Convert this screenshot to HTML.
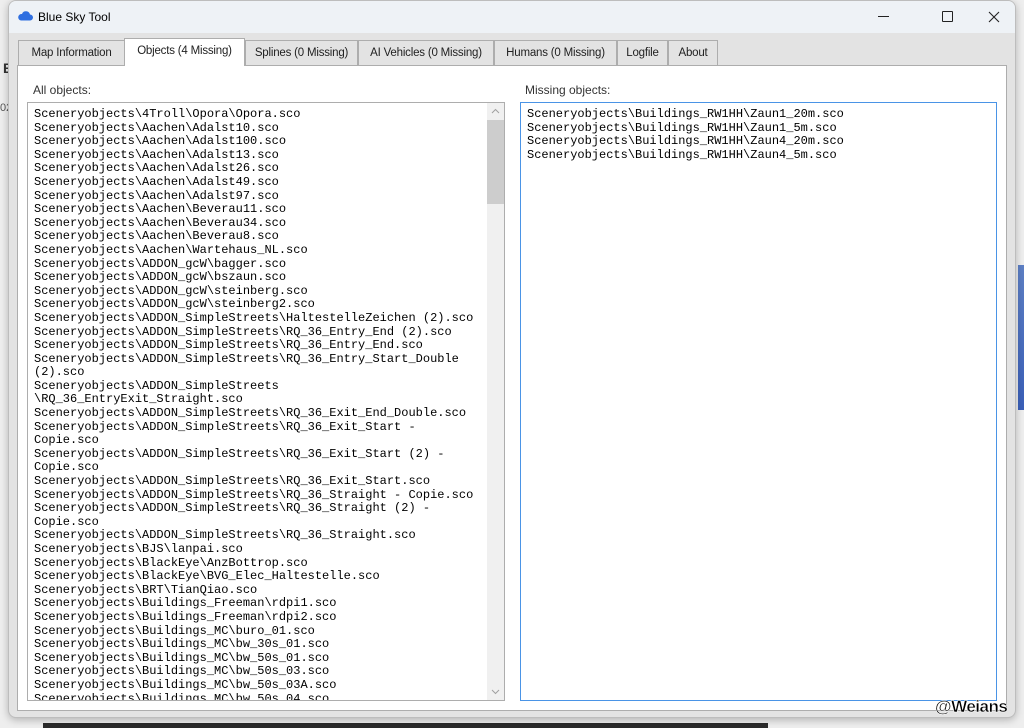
<!DOCTYPE html>
<html><head><meta charset="utf-8"><style>
*{margin:0;padding:0;box-sizing:border-box}
body{width:1024px;height:728px;overflow:hidden;background:#eeeeee;font-family:"Liberation Sans",sans-serif;position:relative}
.win{position:absolute;left:8px;top:0;width:1008px;height:718px;background:#e3e3e3;border:1px solid #bdbdbd;border-radius:8px;overflow:hidden;box-shadow:0 2px 8px rgba(0,0,0,.25)}
.title{height:32px;background:#eef2f6;position:relative;font-size:12px;color:#000}
.title span{position:absolute;left:29px;top:9px}
.tab{position:absolute;top:40px;height:26px;border:1px solid #adadad;border-bottom:none;background:#e3e3e3;font-size:11.5px;letter-spacing:-0.2px;color:#222;text-align:center;line-height:25px;white-space:nowrap;overflow:hidden}
.tab.sel{top:38px;height:28px;background:#fff;z-index:2}
.panel{position:absolute;left:17px;top:65px;width:990px;height:646px;background:#fff;border:1px solid #adadad}
.lbl{position:absolute;font-size:12px;color:#333}
.list{position:absolute;background:#fff;font-family:"Liberation Mono",monospace;font-size:12px;line-height:13.6px;color:#000;overflow:hidden;white-space:pre}
.mono{position:absolute;left:6px;top:5px}
</style></head><body>
<div style="position:absolute;left:3px;top:60px;font-size:14px;font-weight:bold;color:#333">E</div>
<div style="position:absolute;left:0;top:102px;font-size:11px;color:#555">02</div>
<div style="position:absolute;left:1018px;top:265px;width:6px;height:145px;background:linear-gradient(#5d7fc4,#3a5fb8)"></div>
<div style="position:absolute;left:43px;top:723px;width:725px;height:5px;background:#2b2b2b"></div>
<div class="win">
 <div class="title">
  <svg style="position:absolute;left:9px;top:10px" width="15" height="10" viewBox="0 0 15 10"><path d="M3 9.5h9a3 3 0 0 0 0-6 4.2 4.2 0 0 0-8-.5A3.2 3.2 0 0 0 3 9.5z" fill="#2f6fe0"/></svg>
  <span>Blue Sky Tool</span>
  <div style="position:absolute;left:869px;top:15px;width:11px;height:1px;background:#222"></div>
  <div style="position:absolute;left:933px;top:10px;width:11px;height:11px;border:1px solid #222;border-radius:1px"></div>
  <svg style="position:absolute;left:979px;top:10px" width="12" height="12"><path d="M1 1L11 11M11 1L1 11" stroke="#222" stroke-width="1.1"/></svg>
 </div>
</div>
<div class="tab" style="left:18px;width:107px">Map Information</div>
<div class="tab sel" style="left:124px;width:121px">Objects (4 Missing)</div>
<div class="tab" style="left:245px;width:113px">Splines (0 Missing)</div>
<div class="tab" style="left:358px;width:136px">AI Vehicles (0 Missing)</div>
<div class="tab" style="left:494px;width:123px">Humans (0 Missing)</div>
<div class="tab" style="left:617px;width:51px">Logfile</div>
<div class="tab" style="left:668px;width:50px">About</div>
<div class="panel"></div>
<div class="lbl" style="left:33px;top:83px">All objects:</div>
<div class="lbl" style="left:525px;top:83px">Missing objects:</div>
<div class="list" style="left:27px;top:102px;width:478px;height:599px;border:1px solid #adadad">
<div class="mono">Sceneryobjects\4Troll\Opora\Opora.sco
Sceneryobjects\Aachen\Adalst10.sco
Sceneryobjects\Aachen\Adalst100.sco
Sceneryobjects\Aachen\Adalst13.sco
Sceneryobjects\Aachen\Adalst26.sco
Sceneryobjects\Aachen\Adalst49.sco
Sceneryobjects\Aachen\Adalst97.sco
Sceneryobjects\Aachen\Beverau11.sco
Sceneryobjects\Aachen\Beverau34.sco
Sceneryobjects\Aachen\Beverau8.sco
Sceneryobjects\Aachen\Wartehaus_NL.sco
Sceneryobjects\ADDON_gcW\bagger.sco
Sceneryobjects\ADDON_gcW\bszaun.sco
Sceneryobjects\ADDON_gcW\steinberg.sco
Sceneryobjects\ADDON_gcW\steinberg2.sco
Sceneryobjects\ADDON_SimpleStreets\HaltestelleZeichen (2).sco
Sceneryobjects\ADDON_SimpleStreets\RQ_36_Entry_End (2).sco
Sceneryobjects\ADDON_SimpleStreets\RQ_36_Entry_End.sco
Sceneryobjects\ADDON_SimpleStreets\RQ_36_Entry_Start_Double
(2).sco
Sceneryobjects\ADDON_SimpleStreets
\RQ_36_EntryExit_Straight.sco
Sceneryobjects\ADDON_SimpleStreets\RQ_36_Exit_End_Double.sco
Sceneryobjects\ADDON_SimpleStreets\RQ_36_Exit_Start -
Copie.sco
Sceneryobjects\ADDON_SimpleStreets\RQ_36_Exit_Start (2) -
Copie.sco
Sceneryobjects\ADDON_SimpleStreets\RQ_36_Exit_Start.sco
Sceneryobjects\ADDON_SimpleStreets\RQ_36_Straight - Copie.sco
Sceneryobjects\ADDON_SimpleStreets\RQ_36_Straight (2) -
Copie.sco
Sceneryobjects\ADDON_SimpleStreets\RQ_36_Straight.sco
Sceneryobjects\BJS\lanpai.sco
Sceneryobjects\BlackEye\AnzBottrop.sco
Sceneryobjects\BlackEye\BVG_Elec_Haltestelle.sco
Sceneryobjects\BRT\TianQiao.sco
Sceneryobjects\Buildings_Freeman\rdpi1.sco
Sceneryobjects\Buildings_Freeman\rdpi2.sco
Sceneryobjects\Buildings_MC\buro_01.sco
Sceneryobjects\Buildings_MC\bw_30s_01.sco
Sceneryobjects\Buildings_MC\bw_50s_01.sco
Sceneryobjects\Buildings_MC\bw_50s_03.sco
Sceneryobjects\Buildings_MC\bw_50s_03A.sco
Sceneryobjects\Buildings_MC\bw_50s_04.sco</div>
<div style="position:absolute;right:0;top:0;width:17px;height:597px;background:#f0f0f0"></div>
<div style="position:absolute;right:0;top:17px;width:17px;height:84px;background:#cdcdcd"></div>
<svg style="position:absolute;right:4px;top:5px" width="9" height="6"><path d="M1 5L4.5 1.5 8 5" stroke="#a0a0a0" fill="none"/></svg>
<svg style="position:absolute;right:4px;bottom:5px" width="9" height="6"><path d="M1 1L4.5 4.5 8 1" stroke="#a0a0a0" fill="none"/></svg>
</div>
<div class="list" style="left:520px;top:102px;width:477px;height:599px;border:1px solid #4a94e6">
<div class="mono">Sceneryobjects\Buildings_RW1HH\Zaun1_20m.sco
Sceneryobjects\Buildings_RW1HH\Zaun1_5m.sco
Sceneryobjects\Buildings_RW1HH\Zaun4_20m.sco
Sceneryobjects\Buildings_RW1HH\Zaun4_5m.sco</div>
</div>
<div style="position:absolute;left:935px;top:697px;font-size:17px;font-weight:bold;color:#000;-webkit-text-stroke:0.5px #fff;letter-spacing:-0.5px">@Weians</div>
</body></html>
